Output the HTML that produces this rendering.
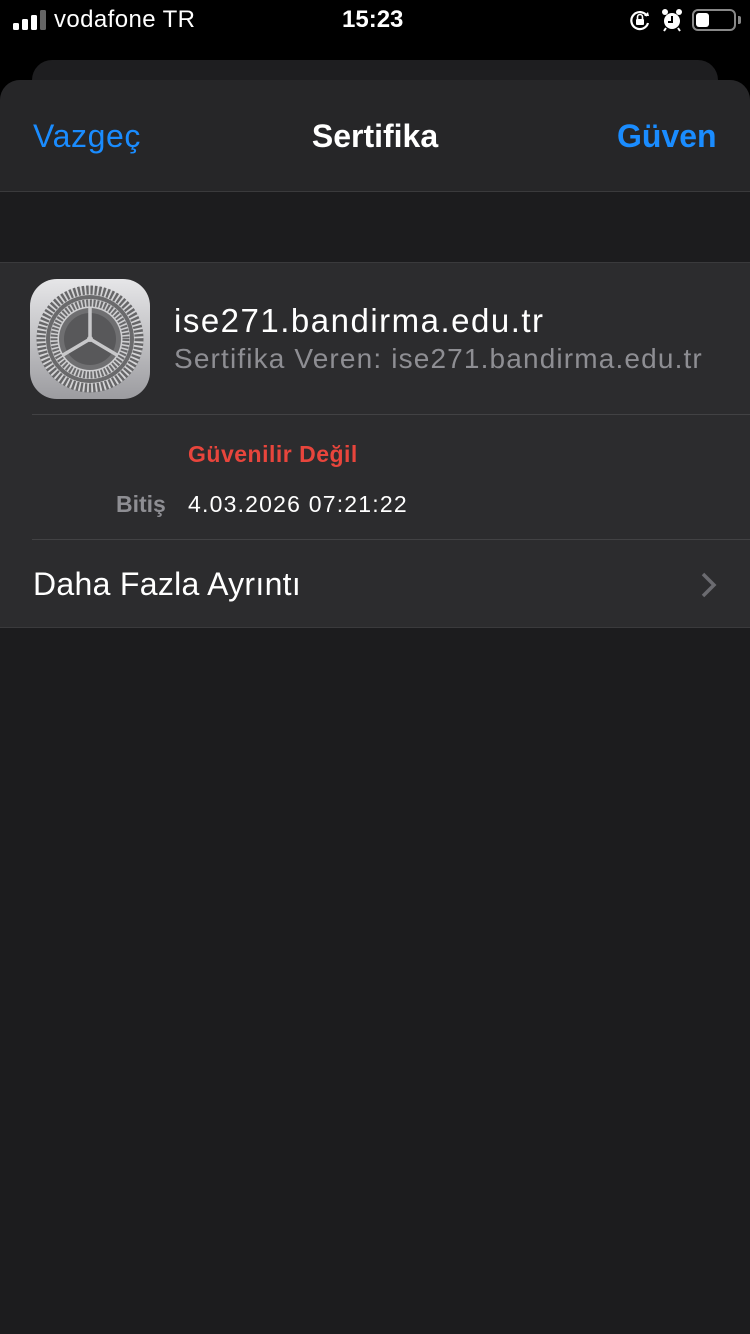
<!DOCTYPE html>
<html><head><meta charset="utf-8">
<style>
*{margin:0;padding:0;box-sizing:border-box}
html,body{width:750px;height:1334px;overflow:hidden}
body{background:#000;font-family:"Liberation Sans",sans-serif;position:relative;color:#fff}
.a{position:absolute;white-space:nowrap}
</style></head><body>
<svg class="a" style="left:12px;top:9px" width="36" height="22"><rect x="1" y="14" width="6" height="7" rx="1.5" fill="#fff"/><rect x="10" y="10" width="6" height="11" rx="1.5" fill="#fff"/><rect x="19" y="6" width="6" height="15" rx="1.5" fill="#fff"/><rect x="28" y="1" width="6" height="20" rx="1.5" fill="#666"/></svg>
<div class="a" style="left:54px;top:6px;font-size:24px;letter-spacing:0.4px">vodafone TR</div>
<div class="a" style="left:342px;top:6px;font-size:24px;font-weight:bold">15:23</div>
<svg class="a" style="left:629px;top:9px" width="22" height="22"><path d="M18 7A8.5 8.5 0 1 0 19 14" fill="none" stroke="#fff" stroke-width="2.2"/><path d="M15 7l5 0l-1-4z" fill="#fff"/><rect x="7" y="10" width="8" height="6" rx="1" fill="#fff"/><path d="M8.5 10V8a2.5 2.5 0 0 1 5 0v2" fill="none" stroke="#fff" stroke-width="1.6"/></svg>
<svg class="a" style="left:661px;top:8px" width="22" height="24"><circle cx="11" cy="13" r="8" fill="#fff"/><circle cx="4" cy="4" r="3" fill="#fff"/><circle cx="18" cy="4" r="3" fill="#fff"/><path d="M11 8v6h-4" stroke="#000" stroke-width="2" fill="none"/><path d="M5 20l-2 3M17 20l2 3" stroke="#fff" stroke-width="2"/></svg>
<div class="a" style="left:692px;top:9px;width:44px;height:22px;border:2px solid #888;border-radius:6px"></div>
<div class="a" style="left:696px;top:13px;width:13px;height:14px;background:#fff;border-radius:3px"></div>
<div class="a" style="left:738px;top:16px;width:3px;height:8px;background:#888;border-radius:0 2px 2px 0"></div>
<div class="a" style="left:32px;top:60px;width:686px;height:60px;background:#1e1e20;border-radius:20px"></div>
<div class="a" style="left:0;top:80px;width:750px;height:1254px;background:#1c1c1e;border-radius:20px 20px 0 0;overflow:hidden">
  <div class="a" style="left:0;top:0;width:750px;height:112px;background:#262628;border-bottom:1px solid #3a3a3c"></div>
  <div class="a" style="left:33px;top:38px;font-size:32px;color:#1a8cff;letter-spacing:0.6px">Vazgeç</div>
  <div class="a" style="left:0;width:750px;text-align:center;top:38px;font-size:32px;font-weight:bold">Sertifika</div>
  <div class="a" style="left:617px;top:38px;font-size:32px;font-weight:bold;color:#1a8cff">Güven</div>
  <div class="a" style="left:0;top:182px;width:750px;height:366px;background:#2c2c2e;border-top:1px solid #3a3a3c;border-bottom:1px solid #3a3a3c"></div>
  <div class="a" style="left:32px;top:334px;width:718px;height:1px;background:#424244"></div>
  <div class="a" style="left:32px;top:459px;width:718px;height:1px;background:#424244"></div>
</div>
<svg class="a" style="left:30px;top:279px" width="120" height="120" viewBox="0 0 120 120">
<defs><linearGradient id="g" x1="0" y1="0" x2="0" y2="1"><stop offset="0" stop-color="#e6e6e8"/><stop offset="1" stop-color="#9c9ca0"/></linearGradient></defs>
<rect width="120" height="120" rx="27" fill="url(#g)"/>
<circle cx="60" cy="60" r="53" fill="#d4d4d6"/>
<circle cx="60" cy="60" r="49" fill="none" stroke="#666668" stroke-width="9" stroke-dasharray="2.4 1.8"/>
<circle cx="60" cy="60" r="44" fill="#6a6a6c"/>
<circle cx="60" cy="60" r="40" fill="#cfcfd1"/>
<circle cx="60" cy="60" r="36" fill="none" stroke="#69696b" stroke-width="7" stroke-dasharray="2 1.6"/>
<circle cx="60" cy="60" r="31" fill="#6f6f71"/>
<circle cx="60" cy="60" r="26" fill="#58585a"/>
<g stroke="#c8c8ca" stroke-width="3.5"><path d="M60 60V29"/><path d="M60 60L33 76"/><path d="M60 60L87 76"/></g>
<circle cx="60" cy="60" r="3" fill="#c8c8ca"/>
</svg>
<div class="a" style="left:174px;top:302px;font-size:33px;letter-spacing:1.5px">ise271.bandirma.edu.tr</div>
<div class="a" style="left:174px;top:343px;font-size:28px;color:#8e8e93;letter-spacing:1.15px">Sertifika Veren: ise271.bandirma.edu.tr</div>
<div class="a" style="left:188px;top:441px;font-size:23px;font-weight:bold;color:#e8453c;letter-spacing:0.5px">Güvenilir Değil</div>
<div class="a" style="left:116px;top:491px;font-size:23px;font-weight:bold;color:#8e8e93">Bitiş</div>
<div class="a" style="left:188px;top:491px;font-size:23px;letter-spacing:1.2px">4.03.2026 07:21:22</div>
<div class="a" style="left:33px;top:566px;font-size:32px;letter-spacing:0.3px">Daha Fazla Ayrıntı</div>
<svg class="a" style="left:700px;top:572px" width="18" height="26"><path d="M3 2l11 11L3 24" fill="none" stroke="#6b6b70" stroke-width="3.5"/></svg>
</body></html>
